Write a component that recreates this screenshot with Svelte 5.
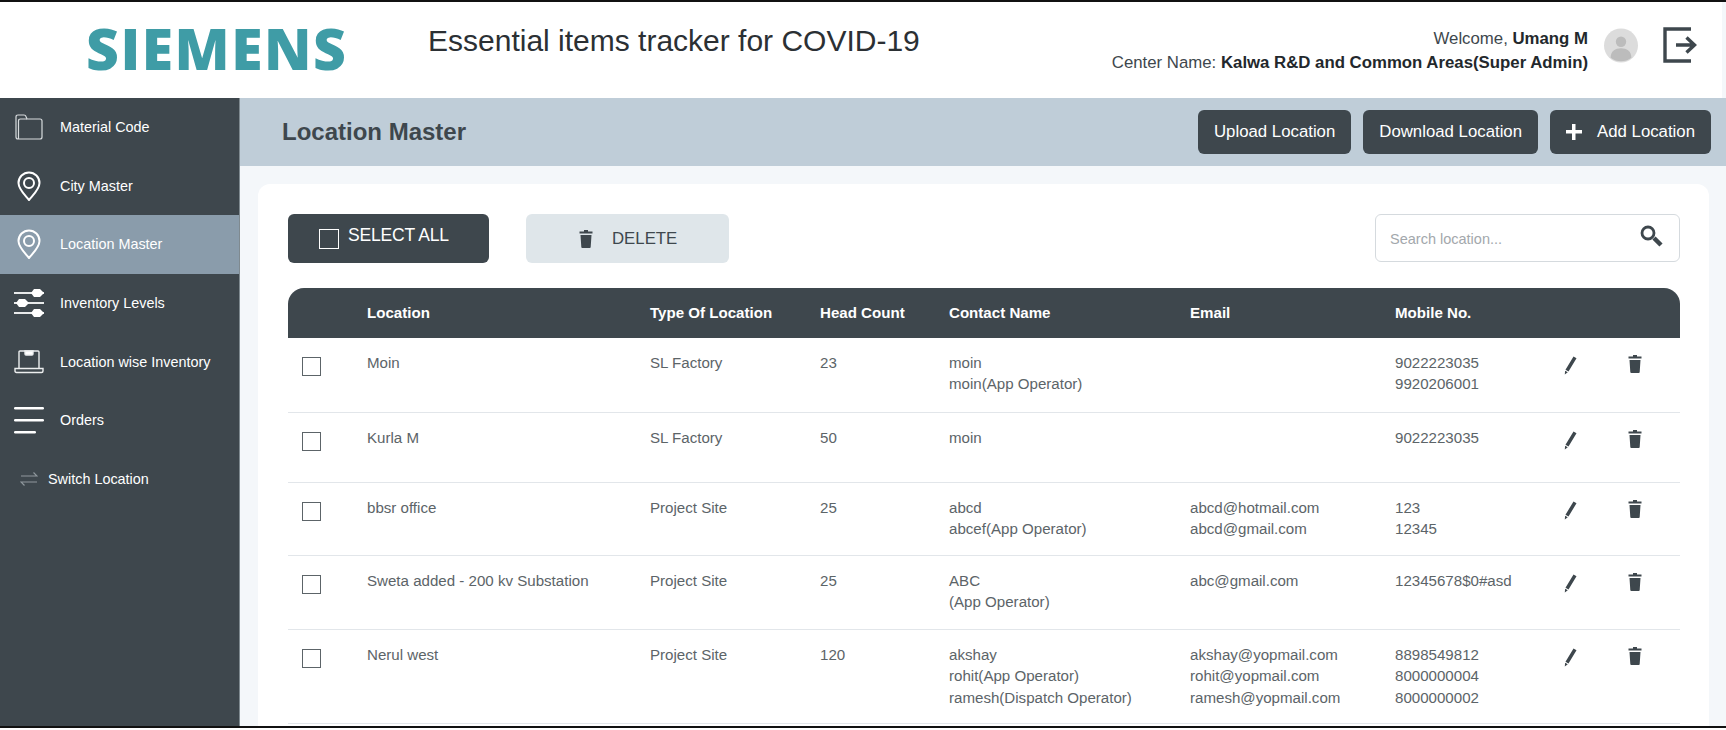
<script>
const menu = [
  { label: 'Material Code', icon: 'folder' },
  { label: 'City Master', icon: 'pin' },
  { label: 'Location Master', icon: 'pin', active: true },
  { label: 'Inventory Levels', icon: 'sliders' },
  { label: 'Location wise Inventory', icon: 'laptop' },
  { label: 'Orders', icon: 'lines' }
]

const rows = [
  { name: 'Moin', type: 'SL Factory', count: '23', contacts: ['moin', 'moin(App Operator)'], emails: [], mobiles: ['9022223035', '9920206001'], height: 75 },
  { name: 'Kurla M', type: 'SL Factory', count: '50', contacts: ['moin'], emails: [], mobiles: ['9022223035'], height: 70 },
  { name: 'bbsr office', type: 'Project Site', count: '25', contacts: ['abcd', 'abcef(App Operator)'], emails: ['abcd@hotmail.com', 'abcd@gmail.com'], mobiles: ['123', '12345'], height: 73 },
  { name: 'Sweta added - 200 kv Substation', type: 'Project Site', count: '25', contacts: ['ABC', '(App Operator)'], emails: ['abc@gmail.com'], mobiles: ['12345678$0#asd'], height: 74 },
  { name: 'Nerul west', type: 'Project Site', count: '120', contacts: ['akshay', 'rohit(App Operator)', 'ramesh(Dispatch Operator)'], emails: ['akshay@yopmail.com', 'rohit@yopmail.com', 'ramesh@yopmail.com'], mobiles: ['8898549812', '8000000004', '8000000002'], height: 94 }
]
</script>

{#snippet trash(cls)}
  <svg class={cls} viewBox="0 0 14 18" aria-hidden="true">
    <path d="M5 0h4v1.500h4.500v2H.5v-2H5zM1.500 5h11l-.8 12q0 1-1 1H3.300q-1 0-1-1z" fill="currentColor" />
  </svg>
{/snippet}

<div class="page">
  <header class="topbar">
    <div class="logo">SIEMENS</div>
    <h1 class="app-title">Essential items tracker for COVID-19</h1>
    <div class="user">
      <div class="user-text">
        <div>Welcome, <b>Umang M</b></div>
        <div>Center Name: <b>Kalwa R&amp;D and Common Areas(Super Admin)</b></div>
      </div>
      <svg class="avatar" viewBox="0 0 36 36" aria-hidden="true">
        <circle cx="18" cy="18" r="18" fill="#dcdcdc" />
        <circle cx="18" cy="14" r="5.500" fill="#bcbcbc" />
        <path d="M7 31c0-7 5-10 11-10s11 3 11 10a18 18 0 0 1-22 0z" fill="#bcbcbc" />
      </svg>
      <svg class="logout" viewBox="0 0 34 36" aria-hidden="true">
        <path d="M28 2H2v32h26" fill="none" stroke="#3e474d" stroke-width="3.400" />
        <path d="M13 18h18M23.500 10.500l8 7.500-8 7.500" fill="none" stroke="#3e474d" stroke-width="3.400" />
      </svg>
    </div>
  </header>

  <div class="body">
    <nav class="sidebar">
      {#each menu as item}
        <div class="nav-item" class:active={item.active}>
          <span class="nav-icon">
            {#if item.icon === 'folder'}
              <svg width="28" height="26" viewBox="0 0 28 26" fill="none" stroke="#d8dcde" stroke-width="1.200">
                <path d="M1 5V3q0-2 2-2h6q1.500 0 2 1.500L12 5h13q2 0 2 2v16q0 2-2 2H3q-2 0-2-2z" />
                <path d="M3.500 25V7q0-2 2-2H12" />
              </svg>
            {:else if item.icon === 'pin'}
              <svg width="24" height="30" viewBox="0 0 24 30" fill="none" stroke="#fff" stroke-width="2">
                <path d="M12 29C7 23 1.500 18 1.500 12a10.500 10.500 0 0 1 21 0c0 6-5.500 11-10.500 17z" />
                <circle cx="12" cy="12" r="5" />
              </svg>
            {:else if item.icon === 'sliders'}
              <svg width="30" height="28" viewBox="0 0 30 28" fill="#fff">
                <path d="M0 4h30M0 14h30M0 24h30" stroke="#e8eaeb" stroke-width="2" />
                <path d="M17 4l3-4h6l4 4-4 4h-6zM2 14l3-4h6l4 4-4 4H5zM17 24l3-4h6l4 4-4 4h-6z" />
              </svg>
            {:else if item.icon === 'laptop'}
              <svg width="30" height="24" viewBox="0 0 30 24" fill="none" stroke="#eceeef" stroke-width="1.400">
                <path d="M5 18V2q0-1 1-1h18q1 0 1 1v16" />
                <path d="M1 18.500h28v2.500q0 1.500-1.500 1.500h-25Q1 22.500 1 21z" />
                <path d="M11 1h8v3q0 1-1 1h-6q-1 0-1-1z" fill="#fff" />
              </svg>
            {:else}
              <svg width="30" height="28" viewBox="0 0 30 28" fill="#fff">
                <rect x="0" y="1" width="30" height="2.500" rx="1.200" />
                <rect x="0" y="13" width="30" height="2.500" rx="1.200" />
                <rect x="0" y="25" width="22" height="2.500" rx="1.200" />
              </svg>
            {/if}
          </span>
          <span>{item.label}</span>
        </div>
      {/each}
      <div class="nav-item switch">
        <svg width="18" height="18" viewBox="0 0 18 18" fill="none" stroke="#8f989d" stroke-width="1.200">
          <path d="M1 6h16L13.500 2.500M17 12H1l3.500 3.500" />
        </svg>
        <span>Switch Location</span>
      </div>
    </nav>

    <main class="main">
      <div class="page-bar">
        <h2>Location Master</h2>
        <div class="page-actions">
          <button class="dark-btn">Upload Location</button>
          <button class="dark-btn">Download Location</button>
          <button class="dark-btn add"><span class="plus"></span>Add Location</button>
        </div>
      </div>

      <section class="card">
        <div class="toolbar">
          <button class="select-all"><span class="box"></span><span class="select-label">SELECT ALL</span></button>
          <button class="delete">{@render trash('delete-icon')}DELETE</button>
          <div class="search">
            <span>Search location...</span>
            <svg width="24" height="24" viewBox="0 0 24 24" fill="none" stroke="#3e474d">
              <circle cx="8" cy="8" r="6" stroke-width="2.800" />
              <path d="M14 13l7 7" stroke-width="4.500" />
            </svg>
          </div>
        </div>

        <div class="table">
          <div class="row head">
            <div></div>
            <div>Location</div>
            <div>Type Of Location</div>
            <div>Head Count</div>
            <div>Contact Name</div>
            <div>Email</div>
            <div>Mobile No.</div>
          </div>
          {#each rows as row}
            <div class="row" style="height: {row.height}px">
              <div><span class="check"></span></div>
              <div>{row.name}</div>
              <div>{row.type}</div>
              <div>{row.count}</div>
              <div>{#each row.contacts as c}<div>{c}</div>{/each}</div>
              <div>{#each row.emails as e}<div>{e}</div>{/each}</div>
              <div>{#each row.mobiles as m}<div>{m}</div>{/each}</div>
              <div class="icon-cell">
                <svg class="pencil" viewBox="0 0 14 20" aria-hidden="true">
                  <path d="M10.500.5l3 1.800-8 13.200-3-1.800zM2.100 14.700l2.700 1.600-3 2.200z" fill="currentColor" />
                </svg>
              </div>
              <div class="icon-cell">{@render trash('row-trash')}</div>
            </div>
          {/each}
        </div>
      </section>
    </main>
  </div>
</div>

<style>
  :global(body) {
    margin: 0;
    background: #fff;
  }

  .page {
    height: 728px;
    overflow: hidden;
    display: flex;
    flex-direction: column;
    font-family: "Liberation Sans", Arial, sans-serif;
    border-top: 2px solid #111;
    border-bottom: 2px solid #111;
    box-sizing: border-box;
  }

  .topbar {
    height: 96px;
    flex: none;
    display: flex;
    align-items: flex-start;
    background: #fff;
    border-right: 4px solid #f4f7fa;
  }

  .logo {
    margin: 17px 0 0 86px;
    width: 342px;
    font-family: "Open Sans", sans-serif;
    font-weight: 800;
    font-size: 57px;
    line-height: 58px;
    letter-spacing: 1.500px;
    color: #3f9ca6;
  }

  .app-title {
    margin: 22px 0 0;
    font-size: 30px;
    line-height: 34px;
    font-weight: 400;
    color: #2b3034;
  }

  .user {
    margin-left: auto;
    display: flex;
    align-items: flex-start;
    padding: 25px 25px 0 0;
  }

  .user-text {
    text-align: right;
    font-size: 16.800px;
    line-height: 24px;
    color: #3e474d;
  }

  .user-text b {
    color: #23282c;
  }

  .avatar {
    width: 34px;
    height: 37px;
    margin-left: 16px;
  }

  .logout {
    width: 34px;
    height: 36px;
    margin-left: 25px;
  }

  .body {
    flex: 1;
    display: flex;
    min-height: 0;
  }

  .sidebar {
    width: 240px;
    flex: none;
    box-sizing: border-box;
    border-right: 1px solid #7f8a90;
    background: #3e474d;
    color: #fff;
    font-size: 14.400px;
  }

  .nav-item {
    height: 58.700px;
    padding-bottom: 1px;
    display: flex;
    align-items: center;
    box-sizing: border-box;
  }

  .nav-item.active {
    background: #8a9cab;
  }

  .nav-icon {
    width: 60px;
    flex: none;
    display: flex;
    justify-content: center;
    padding-right: 2px;
    box-sizing: border-box;
  }

  .switch {
    padding-left: 20px;
    gap: 10px;
  }

  .main {
    flex: 1;
    min-width: 0;
    background: #f4f7fa;
  }

  .page-bar {
    height: 68px;
    display: flex;
    align-items: center;
    justify-content: space-between;
    background: #bfcdd8;
    padding: 0 15px 0 42px;
  }

  .page-bar h2 {
    margin: 0;
    font-size: 24px;
    font-weight: 700;
    color: #3e474d;
  }

  .page-actions {
    display: flex;
    gap: 12px;
  }

  button {
    font-family: inherit;
    border: none;
    margin: 0;
  }

  .dark-btn {
    height: 44px;
    padding: 0 16px;
    background: #3e474d;
    color: #fff;
    font-size: 16.800px;
    border-radius: 6px;
    display: flex;
    align-items: center;
  }

  .plus {
    width: 16px;
    height: 16px;
    margin-right: 15px;
    background:
      linear-gradient(#fff, #fff) center / 100% 3.500px no-repeat,
      linear-gradient(#fff, #fff) center / 3.500px 100% no-repeat;
  }

  .card {
    margin: 18px 17px 0 18px;
    height: 700px;
    padding: 30px 29px 0 30px;
    background: #fff;
    border-radius: 12px;
  }

  .toolbar {
    display: flex;
    align-items: flex-start;
    height: 74px;
  }

  .select-all {
    width: 201px;
    height: 49px;
    background: #3e474d;
    color: #fff;
    border-radius: 6px;
    font-size: 17.500px;
    display: flex;
    align-items: center;
    padding: 0 0 0 31px;
  }

  .box {
    width: 18px;
    height: 18px;
    border: 1px solid #fff;
    margin-right: 9px;
  }

  .select-label {
    position: relative;
    top: -3px;
    letter-spacing: -0.2px;
  }

  .delete {
    width: 203px;
    height: 49px;
    margin-left: 37px;
    background: #dfe6ea;
    color: #3e474d;
    border-radius: 6px;
    font-size: 16.800px;
    display: flex;
    align-items: center;
    padding: 0 0 0 53px;
  }

  .delete-icon {
    width: 14px;
    height: 18px;
    margin-right: 19px;
  }

  .search {
    margin-left: auto;
    width: 305px;
    height: 48px;
    box-sizing: border-box;
    border: 1px solid #d5dade;
    border-radius: 6px;
    display: flex;
    align-items: center;
    justify-content: space-between;
    padding: 2px 15px 0 14px;
    font-size: 14.500px;
    color: #a3a8ac;
  }

  .search svg {
    margin-top: -4px;
  }

  .table {
    font-size: 15.100px;
    line-height: 21.600px;
    color: #5c6468;
  }

  .row {
    display: grid;
    grid-template-columns: 79px 283px 170px 129px 241px 205px 168px 65px 45px;
    box-sizing: border-box;
    border-bottom: 1px solid #e2e6ea;
    padding-top: 13.500px;
  }

  .row.head {
    height: 50px;
    align-items: center;
    padding: 0;
    border: none;
    background: #3e474d;
    color: #fff;
    font-weight: 700;
    border-radius: 16px 16px 0 0;
  }

  .check {
    display: block;
    width: 19px;
    height: 19px;
    margin: 5.500px 0 0 14px;
    border: 1px solid #5c6468;
    box-sizing: border-box;
  }

  .icon-cell {
    color: #3e474d;
  }

  .pencil {
    display: block;
    width: 14px;
    height: 20px;
    margin-top: 4px;
  }

  .row-trash {
    display: block;
    width: 14px;
    height: 18px;
    margin-top: 3px;
  }
</style>
